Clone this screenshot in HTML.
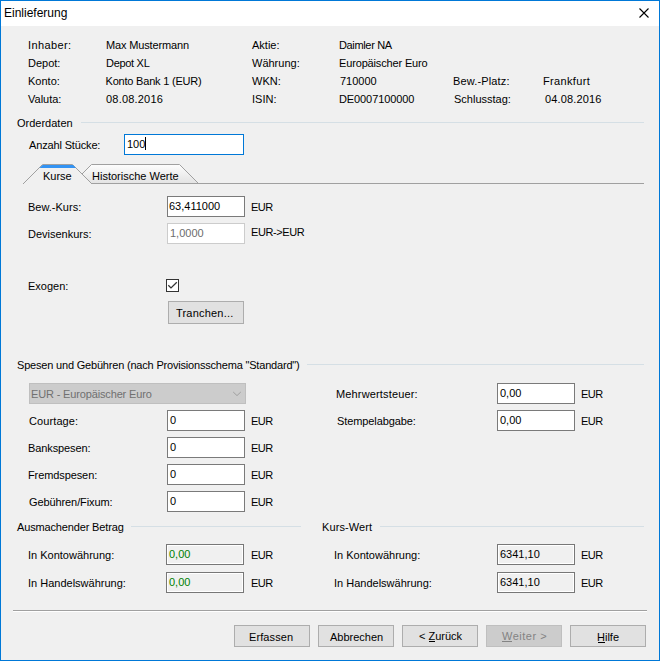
<!DOCTYPE html>
<html><head><meta charset="utf-8">
<style>
html,body{margin:0;padding:0;}
body{width:660px;height:661px;position:relative;overflow:hidden;background:#f0f0f0;font-family:"Liberation Sans",sans-serif;color:#000;}
.t{position:absolute;white-space:nowrap;font-size:11px;line-height:13px;}
.box{position:absolute;box-sizing:border-box;background:#fff;border:1px solid #7a7a7a;}
.btn{position:absolute;box-sizing:border-box;background:#e1e1e1;border:1px solid #adadad;}
.sep{position:absolute;height:1px;background:#d5dfe5;}
u{text-decoration:none;border-bottom:1px solid currentColor;}
</style></head><body>
<!-- window frame -->
<div style="position:absolute;left:0;top:0;width:660px;height:661px;box-sizing:border-box;border:1px solid #0078d7;"></div>
<div style="position:absolute;left:1px;top:1px;width:658px;height:25px;background:#fff;"></div>
<div class="t" style="left:4px;top:6px;font-size:12px;line-height:15px;">Einlieferung</div>
<svg style="position:absolute;left:634px;top:3px" width="20" height="20"><path d="M5.5 5.5 L14.5 14.5 M14.5 5.5 L5.5 14.5" stroke="#000" stroke-width="1.1"/></svg>

<!-- header info -->
<div class="t" style="left:28px;top:39px;letter-spacing:.4px">Inhaber:</div>
<div class="t" style="left:28px;top:57px">Depot:</div>
<div class="t" style="left:28px;top:75px">Konto:</div>
<div class="t" style="left:28px;top:93px">Valuta:</div>
<div class="t" style="left:106px;top:39px;letter-spacing:-.15px">Max Mustermann</div>
<div class="t" style="left:106px;top:57px;letter-spacing:-.3px">Depot XL</div>
<div class="t" style="left:105.5px;top:75px;letter-spacing:-.2px">Konto Bank 1 (EUR)</div>
<div class="t" style="left:106px;top:93px;letter-spacing:.2px">08.08.2016</div>
<div class="t" style="left:252px;top:39px">Aktie:</div>
<div class="t" style="left:252px;top:57px">Währung:</div>
<div class="t" style="left:252px;top:75px">WKN:</div>
<div class="t" style="left:252px;top:93px">ISIN:</div>
<div class="t" style="left:339px;top:39px;letter-spacing:-.35px">Daimler NA</div>
<div class="t" style="left:339px;top:57px;letter-spacing:-.15px">Europäischer Euro</div>
<div class="t" style="left:340px;top:75px">710000</div>
<div class="t" style="left:339px;top:93px;letter-spacing:-.1px">DE0007100000</div>
<div class="t" style="left:453px;top:75px;letter-spacing:.15px">Bew.-Platz:</div>
<div class="t" style="left:454px;top:93px">Schlusstag:</div>
<div class="t" style="left:543px;top:75px;letter-spacing:.35px">Frankfurt</div>
<div class="t" style="left:545px;top:93px;letter-spacing:.15px">04.08.2016</div>

<!-- Orderdaten -->
<div class="t" style="left:17px;top:117px">Orderdaten</div>
<div class="sep" style="left:81px;top:122px;width:563px"></div>
<div class="t" style="left:29px;top:139px;letter-spacing:-.15px">Anzahl Stücke:</div>
<div class="box" style="left:124px;top:134px;width:120px;height:21px;border-color:#0078d7"></div>
<div class="t" style="left:127px;top:138px">100</div>
<div style="position:absolute;left:145px;top:137px;width:1px;height:13px;background:#000"></div>

<!-- tabs -->
<svg style="position:absolute;left:0;top:150px" width="660" height="40">
  <defs><linearGradient id="hg" x1="0" y1="0" x2="0" y2="1"><stop offset="0" stop-color="#fdfdfd"/><stop offset="1" stop-color="#e3e3e3"/></linearGradient></defs>
  <path d="M91.5 14.5 L179.5 14.5 L198.5 33.5 L72.5 33.5 Z" fill="url(#hg)" stroke="#a0a0a0" stroke-width="1"/>
  <line x1="198" y1="33.5" x2="644" y2="33.5" stroke="#a0a0a0" stroke-width="1"/>
  <path d="M23 34 L42.5 14.5 L72.5 14.5 L92 34 Z" fill="#f0f0f0"/>
  <path d="M23 34 L42.5 14.5 L72.5 14.5 L92 34" fill="none" stroke="#a0a0a0" stroke-width="1"/>
  <path d="M42.5 15 L73 15 L76 18 L39.5 18 Z" fill="#3393f3"/>
</svg>
<div class="t" style="left:43px;top:170px">Kurse</div>
<div class="t" style="left:92px;top:170px">Historische Werte</div>

<!-- Kurse content -->
<div class="t" style="left:28px;top:201px">Bew.-Kurs:</div>
<div class="box" style="left:167px;top:196px;width:78px;height:21px;border-color:#7a7a7a"></div>
<div class="t" style="left:169px;top:200px">63,411000</div>
<div class="t" style="left:251px;top:201px;letter-spacing:-.5px">EUR</div>
<div class="t" style="left:28px;top:228px">Devisenkurs:</div>
<div class="box" style="left:167px;top:223px;width:78px;height:21px;border-color:#cccccc"></div>
<div class="t" style="left:170px;top:227px;color:#6d6d6d">1,0000</div>
<div class="t" style="left:251px;top:226px;letter-spacing:-.4px">EUR-&gt;EUR</div>

<div class="t" style="left:28px;top:280px">Exogen:</div>
<div class="box" style="left:166px;top:279px;width:13px;height:13px;border-color:#333"></div>
<svg style="position:absolute;left:166px;top:279px" width="13" height="13"><path d="M2.3 6.2 L5 8.9 L10.8 3.2" fill="none" stroke="#333" stroke-width="1.3"/></svg>
<div class="btn" style="left:168px;top:301px;width:76px;height:23px"></div>
<div class="t" style="left:176px;top:307px;letter-spacing:.2px">Tranchen...</div>

<!-- Spesen -->
<div class="t" style="left:17px;top:359px;letter-spacing:-.19px">Spesen und Gebühren (nach Provisionsschema "Standard")</div>
<div class="sep" style="left:307px;top:364px;width:337px"></div>
<div class="box" style="left:29px;top:383px;width:217px;height:21px;background:#cccccc;border-color:#bfbfbf"></div>
<div class="t" style="left:31px;top:388px;color:#707070;letter-spacing:-.15px">EUR - Europäischer Euro</div>
<svg style="position:absolute;left:230px;top:388px" width="14" height="10"><path d="M3.2 4 L7 7.6 L10.8 4" fill="none" stroke="#a0a0a0" stroke-width="1"/></svg>

<div class="t" style="left:29px;top:415px;letter-spacing:.1px">Courtage:</div>
<div class="t" style="left:28px;top:442px;letter-spacing:-.1px">Bankspesen:</div>
<div class="t" style="left:28px;top:469px;letter-spacing:-.1px">Fremdspesen:</div>
<div class="t" style="left:29px;top:496px;letter-spacing:-.1px">Gebühren/Fixum:</div>
<div class="box" style="left:167px;top:410px;width:78px;height:21px;border-color:#7a7a7a"></div>
<div class="box" style="left:167px;top:437px;width:78px;height:21px;border-color:#7a7a7a"></div>
<div class="box" style="left:167px;top:464px;width:78px;height:21px;border-color:#7a7a7a"></div>
<div class="box" style="left:167px;top:491px;width:78px;height:21px;border-color:#7a7a7a"></div>
<div class="t" style="left:170px;top:414px">0</div>
<div class="t" style="left:170px;top:441px">0</div>
<div class="t" style="left:170px;top:468px">0</div>
<div class="t" style="left:170px;top:495px">0</div>
<div class="t" style="left:251px;top:415px;letter-spacing:-.5px">EUR</div>
<div class="t" style="left:251px;top:442px;letter-spacing:-.5px">EUR</div>
<div class="t" style="left:251px;top:469px;letter-spacing:-.5px">EUR</div>
<div class="t" style="left:251px;top:496px;letter-spacing:-.5px">EUR</div>

<div class="t" style="left:336px;top:388px;letter-spacing:.15px">Mehrwertsteuer:</div>
<div class="t" style="left:337px;top:415px;letter-spacing:-.1px">Stempelabgabe:</div>
<div class="box" style="left:497px;top:383px;width:78px;height:21px;border-color:#7a7a7a"></div>
<div class="box" style="left:497px;top:410px;width:78px;height:21px;border-color:#7a7a7a"></div>
<div class="t" style="left:500px;top:387px">0,00</div>
<div class="t" style="left:500px;top:414px">0,00</div>
<div class="t" style="left:581px;top:388px;letter-spacing:-.5px">EUR</div>
<div class="t" style="left:581px;top:415px;letter-spacing:-.5px">EUR</div>

<!-- Ausmachender Betrag -->
<div class="t" style="left:17px;top:521px;letter-spacing:-.15px">Ausmachender Betrag</div>
<div class="sep" style="left:131px;top:526px;width:170px"></div>
<div class="t" style="left:28px;top:549px">In Kontowährung:</div>
<div class="t" style="left:28px;top:577px">In Handelswährung:</div>
<div class="box" style="left:166px;top:544px;width:78px;height:21px;background:#f0f0f0;border-color:#777777;box-shadow:inset 0 0 0 1px #fff"></div>
<div class="box" style="left:166px;top:572px;width:78px;height:21px;background:#f0f0f0;border-color:#777777;box-shadow:inset 0 0 0 1px #fff"></div>
<div class="t" style="left:169px;top:548px;color:#008000">0,00</div>
<div class="t" style="left:169px;top:576px;color:#008000">0,00</div>
<div class="t" style="left:251px;top:549px;letter-spacing:-.5px">EUR</div>
<div class="t" style="left:251px;top:577px;letter-spacing:-.5px">EUR</div>

<!-- Kurs-Wert -->
<div class="t" style="left:322px;top:521px;letter-spacing:.1px">Kurs-Wert</div>
<div class="sep" style="left:380px;top:526px;width:264px"></div>
<div class="t" style="left:334px;top:549px">In Kontowährung:</div>
<div class="t" style="left:334px;top:577px">In Handelswährung:</div>
<div class="box" style="left:497px;top:544px;width:78px;height:21px;background:#f0f0f0;border-color:#777777;box-shadow:inset 0 0 0 1px #fff"></div>
<div class="box" style="left:497px;top:572px;width:78px;height:21px;background:#f0f0f0;border-color:#777777;box-shadow:inset 0 0 0 1px #fff"></div>
<div class="t" style="left:500px;top:548px">6341,10</div>
<div class="t" style="left:500px;top:576px">6341,10</div>
<div class="t" style="left:581px;top:549px;letter-spacing:-.5px">EUR</div>
<div class="t" style="left:581px;top:577px;letter-spacing:-.5px">EUR</div>

<!-- bottom -->
<div style="position:absolute;left:13px;top:610px;width:634px;height:1px;background:#a0a0a0"></div>
<div style="position:absolute;left:13px;top:611px;width:634px;height:1px;background:#fff"></div>
<div class="btn" style="left:234px;top:625px;width:76px;height:22px"></div>
<div class="btn" style="left:318px;top:625px;width:76px;height:22px"></div>
<div class="btn" style="left:402px;top:625px;width:76px;height:22px"></div>
<div class="btn" style="left:486px;top:625px;width:76px;height:22px;background:#cccccc;border-color:#bfbfbf"></div>
<div class="btn" style="left:570px;top:625px;width:76px;height:22px"></div>
<div class="t" style="left:249px;top:631px;letter-spacing:.1px">Erfassen</div>
<div class="t" style="left:330px;top:631px">Abbrechen</div>
<div class="t" style="left:419px;top:630px">&lt; Zurück</div>
<div style="position:absolute;left:429px;top:641px;width:6px;height:1px;background:#000"></div>
<div class="t" style="left:502px;top:630px;color:#838383;letter-spacing:.5px">Weiter &gt;</div>
<div style="position:absolute;left:502px;top:641px;width:10px;height:1px;background:#838383"></div>
<div class="t" style="left:597px;top:631px">Hilfe</div>
<div style="position:absolute;left:598px;top:642px;width:7px;height:1px;background:#000"></div>
</body></html>
